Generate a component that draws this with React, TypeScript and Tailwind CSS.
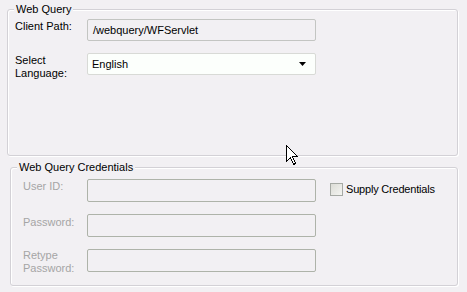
import React from 'react';

const font = { fontFamily: '"Liberation Sans", Arial, sans-serif' };

function Group({ title, className, children }: { title: string; className: string; children: React.ReactNode }) {
  return (
    <div className={`relative rounded-[3px] border border-[#d3d1d6] shadow-[inset_1px_1px_0_#ffffff,1px_1px_0_#ffffff] ${className}`}>
      <span className="absolute -top-[8px] left-[6px] bg-[#f2f0f3] px-[2px] text-[11px] leading-[14px] text-black">
        {title}
      </span>
      {children}
    </div>
  );
}

function Cursor() {
  return (
    <svg className="absolute left-[286px] top-[145px]" width="13" height="21" viewBox="0 0 13 21">
      <path
        d="M0.5 0.5 L0.5 16.5 L4.5 12.5 L7.5 19.5 L9.5 18.5 L6.5 11.5 L11.5 11.5 Z"
        fill="#ffffff"
        stroke="#000000"
        strokeWidth="1"
        shapeRendering="crispEdges"
      />
    </svg>
  );
}

export default function App() {
  return (
    <div style={font} className="relative w-[467px] h-[292px] bg-[#f2f0f3] pt-[9px] text-[11px] overflow-hidden">
      <Group title="Web Query" className="ml-[7px] w-[451px] h-[147px]">
        <div className="flex flex-col gap-[12px] pt-[9px] pl-[7px]">
          <div className="flex items-start">
            <div className="w-[72px] pt-[1px] leading-[13px] text-black">Client Path:</div>
            <div className="w-[229px] h-[22px] rounded-[2px] border border-[#c3c5c2] bg-[#f2f0f3] px-[5px] flex items-center text-black">
              /webquery/WFServlet
            </div>
          </div>
          <div className="flex items-start">
            <div className="w-[72px] pt-[1px] leading-[13px] text-black">
              Select
              <br />
              Language:
            </div>
            <div className="w-[229px] h-[22px] rounded-[2px] border border-[#d8dad6] bg-[#fcfffc] pl-[4px] pr-[8px] flex items-center justify-between text-black">
              <span>English</span>
              <svg width="8" height="4" viewBox="0 0 8 4">
                <path d="M0 0 H7 L3.5 4 Z" fill="#000000" />
              </svg>
            </div>
          </div>
        </div>
      </Group>

      <Group title="Web Query Credentials" className="ml-[10px] mt-[11px] w-[448px] h-[119px]">
        <div className="flex pt-[11px] pl-[12px]">
          <div className="flex flex-col gap-[12px]">
            <div className="flex items-start">
              <div className="w-[64px] pt-[1px] leading-[13px] text-[#a5a5a5]">User ID:</div>
              <div className="w-[229px] h-[23px] rounded-[2px] border border-[#aeb3a9] bg-[#f2f0f3]" />
            </div>
            <div className="flex items-start">
              <div className="w-[64px] pt-[2px] leading-[13px] text-[#a5a5a5]">Password:</div>
              <div className="w-[229px] h-[23px] rounded-[2px] border border-[#aeb3a9] bg-[#f2f0f3]" />
            </div>
            <div className="flex items-start">
              <div className="w-[64px] pt-[0px] leading-[13px] text-[#a5a5a5]">
                Retype
                <br />
                Password:
              </div>
              <div className="w-[229px] h-[23px] rounded-[2px] border border-[#aeb3a9] bg-[#f2f0f3]" />
            </div>
          </div>
          <div className="ml-[14px] mt-[4px] flex items-start gap-[3px]">
            <div className="w-[13px] h-[13px] border border-[#a6a9a4] bg-gradient-to-br from-[#dcdcd6] to-[#f5f5f2]" />
            <span className="leading-[13px] text-black tracking-[-0.2px]">Supply Credentials</span>
          </div>
        </div>
      </Group>

      <Cursor />
    </div>
  );
}
